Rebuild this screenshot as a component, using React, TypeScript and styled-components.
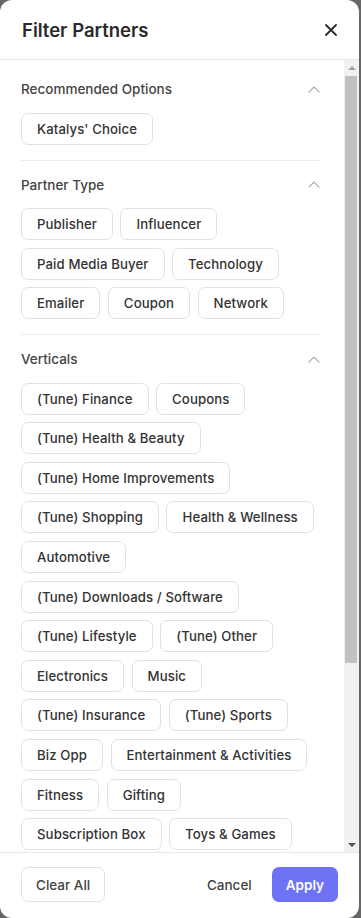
import React from "react";
import styled, { createGlobalStyle } from "styled-components";

const Global = createGlobalStyle`
  html, body { margin: 0; padding: 0; background: #666666; }
  * { box-sizing: border-box; }
  body { font-family: Inter, "Noto Sans", sans-serif; }
`;

const Modal = styled.div`
  width: 359px;
  height: 918px;
  background: #ffffff;
  border-radius: 12px;
  display: flex;
  flex-direction: column;
  overflow: hidden;
`;

const Header = styled.div`
  height: 60px;
  flex: none;
  display: flex;
  align-items: center;
  justify-content: space-between;
  padding: 1px 22px 0 22px;
  border-bottom: 1px solid #e8e8e8;
`;

const Title = styled.h2`
  margin: 0;
  font-size: 18.5px;
  font-weight: 600;
  color: #2a2a2a;
`;

const CloseButton = styled.button`
  border: none;
  background: none;
  padding: 0;
  width: 12px;
  height: 12px;
  display: flex;
  align-items: center;
  justify-content: center;
  cursor: pointer;
`;

const BodyRow = styled.div`
  flex: 1;
  min-height: 0;
  display: flex;
`;

const Content = styled.div`
  flex: 1;
  min-width: 0;
  overflow: hidden;
  padding: 5px 23px 20px 21px;
`;

const ScrollBar = styled.div`
  width: 15px;
  flex: none;
  display: flex;
  flex-direction: column;
  background: #f1f1f1;
`;

const ScrollArrow = styled.div`
  height: 15px;
  flex: none;
  display: flex;
  align-items: center;
  justify-content: center;
`;

const ScrollTrack = styled.div`
  flex: 1;
  padding: 1px 2px 0 1px;
`;

const ScrollThumb = styled.div`
  height: 587px;
  background: #c1c1c1;
`;

const Section = styled.section<{ $last?: boolean }>`
  padding: 12px 0 15px;
  border-bottom: ${(p) => (p.$last ? "none" : "1px solid #ececec")};
`;

const SectionHead = styled.div`
  height: 24px;
  display: flex;
  align-items: center;
  justify-content: space-between;
  margin-bottom: 11.5px;
`;

const SectionTitle = styled.h3`
  margin: 0;
  font-size: 13.5px;
  font-weight: 500;
  color: #444444;
`;

const Chevron = styled.svg`
  width: 12px;
  height: 7px;
  margin-right: 1px;
`;

const Chips = styled.div`
  display: flex;
  flex-wrap: wrap;
  gap: 7.6px 7.5px;
`;

const Chip = styled.button`
  height: 32px;
  padding: 0 15px;
  border: 1px solid #e2e2e2;
  border-radius: 7px;
  background: #ffffff;
  font-family: inherit;
  font-size: 13.2px;
  font-weight: 500;
  letter-spacing: 0.1px;
  color: #333333;
  white-space: nowrap;
  cursor: pointer;
`;

const Footer = styled.div`
  height: 66px;
  flex: none;
  border-top: 1px solid #e8e8e8;
  display: flex;
  align-items: flex-start;
  justify-content: space-between;
  padding: 14px 21px 0 21px;
`;

const Actions = styled.div`
  display: flex;
  align-items: center;
  gap: 5px;
`;

const OutlineButton = styled.button`
  height: 35px;
  padding: 0 14px;
  border: 1px solid #e2e2e2;
  border-radius: 7px;
  background: #ffffff;
  font-family: inherit;
  font-size: 13.5px;
  font-weight: 500;
  color: #444444;
`;

const TextButton = styled.button`
  height: 35px;
  padding: 0 15px;
  border: none;
  background: none;
  font-family: inherit;
  font-size: 13.5px;
  font-weight: 500;
  color: #444444;
`;

const PrimaryButton = styled.button`
  height: 35px;
  padding: 0 14px;
  border: none;
  border-radius: 7px;
  background: #6e73f6;
  font-family: inherit;
  font-size: 13.5px;
  font-weight: 600;
  color: #ffffff;
`;

const sections: { title: string; items: string[] }[] = [
  { title: "Recommended Options", items: ["Katalys' Choice"] },
  {
    title: "Partner Type",
    items: ["Publisher", "Influencer", "Paid Media Buyer", "Technology", "Emailer", "Coupon", "Network"],
  },
  {
    title: "Verticals",
    items: [
      "(Tune) Finance",
      "Coupons",
      "(Tune) Health & Beauty",
      "(Tune) Home Improvements",
      "(Tune) Shopping",
      "Health & Wellness",
      "Automotive",
      "(Tune) Downloads / Software",
      "(Tune) Lifestyle",
      "(Tune) Other",
      "Electronics",
      "Music",
      "(Tune) Insurance",
      "(Tune) Sports",
      "Biz Opp",
      "Entertainment & Activities",
      "Fitness",
      "Gifting",
      "Subscription Box",
      "Toys & Games",
    ],
  },
];

const ChevronUp = () => (
  <Chevron viewBox="0 0 12 7" fill="none">
    <polyline points="0.6,6.4 6,1 11.4,6.4" stroke="#ababab" strokeWidth="1.2" />
  </Chevron>
);

export default function App() {
  return (
    <>
      <Global />
      <Modal>
        <Header>
          <Title>Filter Partners</Title>
          <CloseButton aria-label="Close">
            <svg width="12" height="12" viewBox="0 0 12 12">
              <path d="M1 1 L11 11 M11 1 L1 11" stroke="#2a2a2a" strokeWidth="1.8" strokeLinecap="round" />
            </svg>
          </CloseButton>
        </Header>
        <BodyRow>
          <Content>
            {sections.map((s, i) => (
              <Section key={s.title} $last={i === sections.length - 1}>
                <SectionHead>
                  <SectionTitle>{s.title}</SectionTitle>
                  <ChevronUp />
                </SectionHead>
                <Chips>
                  {s.items.map((it) => (
                    <Chip key={it}>{it}</Chip>
                  ))}
                </Chips>
              </Section>
            ))}
          </Content>
          <ScrollBar>
            <ScrollArrow>
              <svg width="8" height="4" viewBox="0 0 8 4">
                <polygon points="0,4 4,0 8,4" fill="#a3a3a3" />
              </svg>
            </ScrollArrow>
            <ScrollTrack>
              <ScrollThumb />
            </ScrollTrack>
            <ScrollArrow>
              <svg width="8" height="4" viewBox="0 0 8 4">
                <polygon points="0,0 8,0 4,4" fill="#505050" />
              </svg>
            </ScrollArrow>
          </ScrollBar>
        </BodyRow>
        <Footer>
          <OutlineButton>Clear All</OutlineButton>
          <Actions>
            <TextButton>Cancel</TextButton>
            <PrimaryButton>Apply</PrimaryButton>
          </Actions>
        </Footer>
      </Modal>
    </>
  );
}
